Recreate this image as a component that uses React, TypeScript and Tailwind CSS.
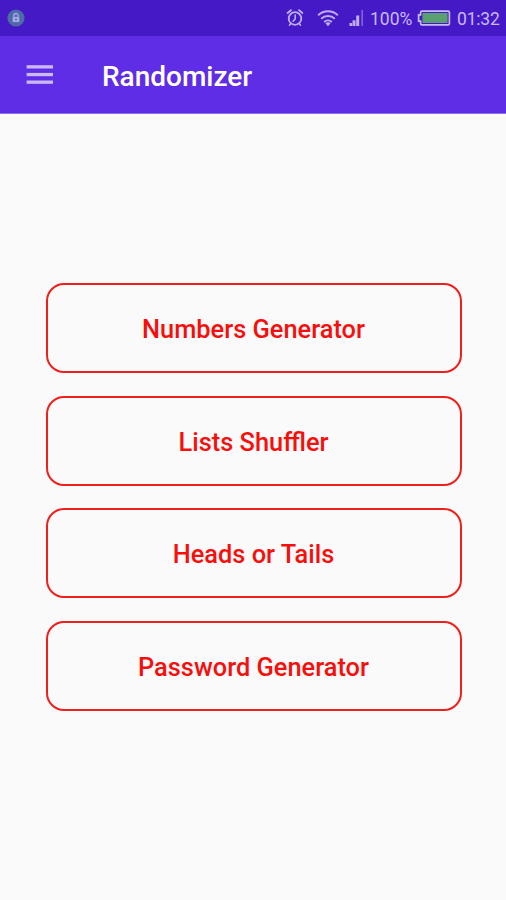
import React from 'react';

interface MenuEntry {
  id: string;
  label: string;
}

const menuEntries: MenuEntry[] = [
  { id: 'numbers', label: 'Numbers Generator' },
  { id: 'lists', label: 'Lists Shuffler' },
  { id: 'coin', label: 'Heads or Tails' },
  { id: 'password', label: 'Password Generator' },
];

const LockBadge: React.FC = () => (
  <svg width="18" height="18" viewBox="0 0 18 18" fill="none">
    <circle cx="9" cy="9" r="8.6" fill="#4d6ba6" />
    <path d="M6.8 8.2V6.7a2.2 2.2 0 0 1 4.4 0v1.5" stroke="#a9a9ea" strokeWidth="1.3" />
    <rect x="5.7" y="8" width="6.6" height="5" rx="0.6" fill="#a9a9ea" />
    <circle cx="9" cy="10.4" r="1" fill="#4d6ba6" />
  </svg>
);

const AlarmIcon: React.FC = () => (
  <svg width="18" height="20" viewBox="0 0 18 20" fill="none" stroke="#bfaef3" strokeLinecap="round">
    <circle cx="9" cy="10.5" r="6.3" strokeWidth="1.8" />
    <path d="M1.6 4.9 4.9 2.2M16.4 4.9l-3.3-2.7" strokeWidth="1.9" />
    <path d="M9.2 7v4L7 13.2M4.8 15.6l-1.3 1.6M13.2 15.6l1.3 1.6" strokeWidth="1.6" />
  </svg>
);

const WifiIcon: React.FC = () => (
  <svg width="22" height="18" viewBox="0 0 22 18" fill="none" stroke="#bfaef3" strokeWidth="2">
    <path d="M1.2 6.3c5.4-5.3 14.2-5.3 19.6 0" />
    <path d="M4.2 9.7c3.8-3.6 9.8-3.6 13.6 0" />
    <path d="M7.2 13c2.2-2 5.4-2 7.6 0" />
    <path d="M8.4 14.2 11 17.2l2.6-3c-1.5-1.3-3.7-1.3-5.2 0Z" fill="#bfaef3" stroke="none" />
  </svg>
);

const SignalIcon: React.FC = () => (
  <svg width="15" height="18" viewBox="0 0 15 18" fill="#bfaef3">
    <rect x="0.5" y="14" width="2.7" height="3" />
    <rect x="3.6" y="11.3" width="2.9" height="5.7" />
    <rect x="7.2" y="6.5" width="3" height="10.5" />
    <rect x="12.4" y="1" width="1.6" height="16" opacity="0.5" />
  </svg>
);

const BatteryIcon: React.FC = () => (
  <svg width="34" height="16" viewBox="0 0 34 16" fill="none">
    <path d="M5 1.2h26a1.4 1.4 0 0 1 1.4 1.4v10.8a1.4 1.4 0 0 1-1.4 1.4H5a1.4 1.4 0 0 1-1.4-1.4v-2.2H1.6V4.8h2V2.6A1.4 1.4 0 0 1 5 1.2Z" stroke="#c9b9f7" strokeWidth="1.7" />
    <rect x="5.4" y="3" width="25.2" height="10" fill="#5aa070" />
  </svg>
);

const MenuIcon: React.FC = () => (
  <svg width="28" height="20" viewBox="0 0 28 20" fill="#cbb9f8">
    <rect x="0.6" y="0.2" width="26.4" height="3.3" />
    <rect x="0.6" y="7.9" width="26.4" height="3.3" />
    <rect x="0.6" y="15.5" width="26.4" height="3.3" />
  </svg>
);

const StatusBar: React.FC = () => (
  <div className="flex h-9 items-center bg-[#4519c6] pl-[7px] pr-[6px] text-[17.5px] leading-none text-[#c9baf8]">
    <LockBadge />
    <div className="ml-auto flex items-center">
      <AlarmIcon />
      <div className="ml-[13px]"><WifiIcon /></div>
      <div className="ml-[10px]"><SignalIcon /></div>
      <span className="ml-[6px] w-[41px] whitespace-nowrap pt-[3px]">100%</span>
      <div className="ml-[6px]"><BatteryIcon /></div>
      <span className="ml-[6px] w-[43px] whitespace-nowrap pt-[3px] tracking-[-0.2px]">01:32</span>
    </div>
  </div>
);

const AppBar: React.FC = () => (
  <header className="flex h-[78px] items-center border-b border-[#8f6cf0] bg-[#5e2de5] pl-[26px]">
    <button aria-label="Menu" className="mt-px">
      <MenuIcon />
    </button>
    <h1 className="ml-[48px] pt-[4px] text-[28px] font-medium leading-none text-white">Randomizer</h1>
  </header>
);

export default function App() {
  return (
    <div className="flex h-[900px] w-full flex-col overflow-hidden bg-[#fafafa] font-['Roboto',sans-serif]">
      <StatusBar />
      <AppBar />
      <main className="flex flex-1 flex-col gap-[22.5px] pl-[46px] pr-[44px] pt-[169px]">
        {menuEntries.map((entry) => (
          <button
            key={entry.id}
            className="flex h-[90px] shrink-0 items-center justify-center rounded-[18px] border-2 border-[#ef1f1c] pt-[3px] pr-px text-[25.4px] font-medium text-[#f60f0c]"
          >
            {entry.label}
          </button>
        ))}
      </main>
    </div>
  );
}
